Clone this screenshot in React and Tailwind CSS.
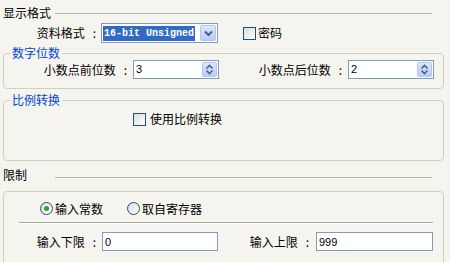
import React from "react";

function SpinBtn() {
  return (
    <div className="w-[15px] h-[15px] rounded-[2px] border border-[#b3c6f0] bg-gradient-to-b from-[#dbe5fc] to-[#b9cdf7] flex items-center justify-center">
      <svg width="9" height="11" viewBox="0 0 9 11">
        <path d="M1.5 4.5 L4.5 1.5 L7.5 4.5" fill="none" stroke="#4d6185" strokeWidth="1.6" />
        <path d="M1.5 6.5 L4.5 9.5 L7.5 6.5" fill="none" stroke="#4d6185" strokeWidth="1.6" />
      </svg>
    </div>
  );
}

function DropBtn() {
  return (
    <div className="w-[16px] h-[16px] rounded-[2px] border border-[#b3c6f0] bg-gradient-to-b from-[#dbe5fc] to-[#b9cdf7] flex items-center justify-center">
      <svg width="9" height="7" viewBox="0 0 9 7">
        <path d="M1 1.5 L4.5 5 L8 1.5" fill="none" stroke="#4d6185" strokeWidth="2" />
      </svg>
    </div>
  );
}

function Checkbox() {
  return (
    <div className="w-[13px] h-[13px] border border-[#1c5180] bg-gradient-to-br from-[#dcdcd7] to-[#ffffff]" />
  );
}

function Radio({ checked }) {
  return (
    <div className="w-[13px] h-[13px] rounded-full border border-[#1c5180] bg-gradient-to-br from-[#dcdcd7] to-[#ffffff] flex items-center justify-center">
      {checked && <div className="w-[5px] h-[5px] rounded-full bg-[#2fa52f]" />}
    </div>
  );
}

function Label({ w, children }) {
  return (
    <div className={`${w} flex justify-end items-center whitespace-nowrap`}>
      <span>{children}</span>
      <span className="ml-[8px] mr-[1px]">:</span>
    </div>
  );
}

function Spin({ value }) {
  return (
    <div className="ml-[5px] w-[86px] h-[19px] border border-[#7f9db9] bg-white flex items-center">
      <span className="flex-1 pl-[2px] font-['Liberation_Sans',sans-serif] text-[11px] leading-[15px]">{value}</span>
      <div className="mr-px">
        <SpinBtn />
      </div>
    </div>
  );
}

export default function App() {
  return (
    <div className="w-[450px] h-[262px] overflow-hidden bg-[#f5f4ef] text-[12px] leading-[14px] text-black font-['Noto_Sans_CJK_SC',sans-serif]">
      {/* 显示格式 header */}
      <div className="mt-[6px] h-[14px] flex items-center pl-[3px] pr-[18px]">
        <span>显示格式</span>
        <div className="flex-1 ml-[4px] h-px bg-[#b4b3ad] mt-px" />
      </div>

      {/* 资料格式 row */}
      <div className="mt-[3px] h-[20px] flex items-center">
        <Label w="w-[97px]">资料格式</Label>
        <div className="ml-[4px] w-[117px] h-[20px] border border-[#7f9db9] bg-white flex items-center px-px">
          <div className="flex-1 flex items-center">
            <span className="bg-[#316ac5] text-white font-['Liberation_Mono',monospace] font-bold text-[10px] leading-[15px] h-[15px] px-px whitespace-nowrap">
              16-bit Unsigned
            </span>
          </div>
          <DropBtn />
        </div>
        <div className="ml-[25px] flex items-center">
          <Checkbox />
          <span className="ml-[2px]">密码</span>
        </div>
      </div>

      {/* 数字位数 group */}
      <fieldset className="mt-[3px] ml-[3px] w-[441px] border border-[#d0d0bf] rounded-[4px] p-0 pb-[9px] m-0">
        <legend className="ml-[6px] px-[2px] text-[#0046d5] leading-[14px]">数字位数</legend>
        <div className="h-[19px] flex items-center">
          <Label w="w-[124px]">小数点前位数</Label>
          <Spin value="3" />
          <Label w="w-[124px]">小数点后位数</Label>
          <Spin value="2" />
        </div>
      </fieldset>

      {/* 比例转换 group */}
      <fieldset className="mt-[4px] ml-[3px] w-[441px] border border-[#d0d0bf] rounded-[4px] p-0 m-0">
        <legend className="ml-[6px] px-[2px] text-[#0046d5] leading-[14px]">比例转换</legend>
        <div className="h-[53px] pt-[5px]">
          <div className="ml-[129px] flex items-center">
            <Checkbox />
            <span className="ml-[4px]">使用比例转换</span>
          </div>
        </div>
      </fieldset>

      {/* 限制 header */}
      <div className="mt-[7px] h-[14px] flex items-center pl-[3px] pr-[18px]">
        <span>限制</span>
        <div className="flex-1 ml-[28px] h-px bg-[#b4b3ad] mt-[4px]" />
      </div>

      {/* 限制 group */}
      <div className="mt-[9px] ml-[3px] w-[441px] h-[120px] border border-[#d0d0bf] rounded-t-[4px]">
        <div className="mt-[10px] h-[13px] flex items-center">
          <div className="ml-[36px] flex items-center">
            <Radio checked />
            <span className="ml-[2px]">输入常数</span>
          </div>
          <div className="ml-[24px] flex items-center">
            <Radio />
            <span className="ml-[2px]">取自寄存器</span>
          </div>
        </div>
        <div className="mt-[7px] ml-[15px] mr-[10px] border-t border-[#aca899] border-b border-b-white" />
        <div className="mt-[8px] h-[19px] flex items-center">
          <Label w="w-[93px]">输入下限</Label>
          <div className="ml-[5px] w-[116px] h-[19px] border border-[#7f9db9] bg-white flex items-center pl-[2px] font-['Liberation_Sans',sans-serif] text-[11px]">
            0
          </div>
          <Label w="w-[92px]">输入上限</Label>
          <div className="ml-[6px] w-[117px] h-[19px] border border-[#7f9db9] bg-white flex items-center pl-[2px] font-['Liberation_Sans',sans-serif] text-[11px]">
            999
          </div>
        </div>
      </div>
    </div>
  );
}
